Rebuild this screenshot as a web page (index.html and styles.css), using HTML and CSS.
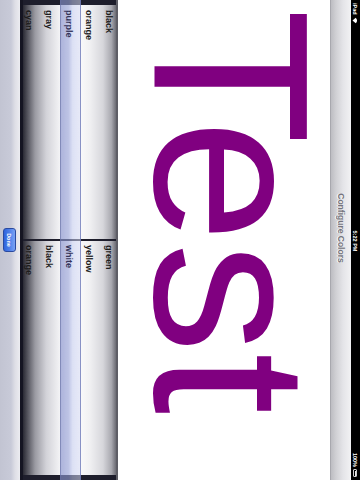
FILE: index.html
```html
<!DOCTYPE html>
<html lang="en">
<head>
    <meta charset="UTF-8">
    <meta name="viewport" content="width=device-width, initial-scale=1.0">
    <title>Configure Colors</title>
    <link rel="stylesheet" href="styles.css">
</head>
<body>
    <div class="screen">
        <div class="status-bar">
            <div class="status-left">
                iPad
                <svg class="wifi" width="7" height="6" viewBox="0 0 14 12">
                    <path d="M7 11 L1.5 4.5 A8 8 0 0 1 12.5 4.5 Z" fill="#fff"/>
                </svg>
            </div>
            <div class="status-time">5:22 PM</div>
            <div class="status-right">
                100%
                <span class="battery"><span class="battery-fill"></span></span>
            </div>
        </div>

        <div class="nav-bar">
            <span class="nav-title">Configure Colors</span>
        </div>

        <div class="content">
            <div class="preview">Test</div>
        </div>

        <div class="picker">
            <div class="wheel">
                <div class="rows">
                    <div class="row">black</div>
                    <div class="row">orange</div>
                    <div class="row selected">purple</div>
                    <div class="row">gray</div>
                    <div class="row">cyan</div>
                </div>
            </div>
            <div class="wheel">
                <div class="rows">
                    <div class="row">green</div>
                    <div class="row">yellow</div>
                    <div class="row selected">white</div>
                    <div class="row">black</div>
                    <div class="row">orange</div>
                </div>
            </div>
            <div class="selection"></div>
        </div>

        <div class="toolbar">
            <button class="done">Done</button>
        </div>
    </div>
</body>
</html>
```

FILE: styles.css
```css
html, body {
    margin: 0;
    width: 360px;
    height: 480px;
    overflow: hidden;
    background-color: #ffffff;
    font-family: "Liberation Sans", Arial, sans-serif;
}

/* the device is held sideways, so the landscape screen is turned a quarter clockwise */
.screen {
    width: 480px;
    height: 360px;
    display: flex;
    flex-direction: column;
    transform-origin: 0 0;
    transform: translateX(360px) rotate(90deg);
}

.status-bar {
    height: 9px;
    flex: none;
    background-color: #000000;
    color: #ffffff;
    font-size: 5.5px;
    font-weight: bold;
    display: grid;
    grid-template-columns: 1fr auto 1fr;
    align-items: center;
    padding: 0 3px;
}
.status-left {
    display: flex;
    align-items: center;
    gap: 2px;
}
.status-time {
    padding-left: 2px;
}
.status-right {
    display: flex;
    align-items: center;
    justify-content: flex-end;
    gap: 2px;
}
.battery {
    width: 8px;
    height: 4px;
    border: 1px solid #cfcfcf;
    border-radius: 1px;
    display: flex;
    padding: 0.5px;
    box-sizing: border-box;
}
.battery-fill {
    flex: 1;
    background-color: #e8e8e8;
}

.nav-bar {
    height: 21px;
    flex: none;
    box-sizing: border-box;
    background: linear-gradient(to bottom, #f2f2f4 0%, #e4e4e8 40%, #d0d0d4 75%, #bdbdc2 100%);
    border-bottom: 1px solid #a8a8ae;
    display: flex;
    justify-content: center;
    align-items: center;
    padding-right: 24px;
}
.nav-title {
    font-size: 8.5px;
    font-weight: bold;
    color: #74747c;
    text-shadow: 0 1px 0 #ffffff;
}

.content {
    height: 212px;
    flex: none;
    background-color: #ffffff;
}
.preview {
    padding-left: 9px;
    font-size: 221px;
    line-height: 197px;
    color: #800080;
    white-space: nowrap;
}

.picker {
    position: relative;
    height: 98px;
    flex: none;
    box-sizing: border-box;
    display: grid;
    grid-template-columns: 1fr 1fr;
    gap: 2px;
    padding: 0 5px;
    background-color: #1e1e2c;
    border-top: 2px solid #5e5e66;
    border-bottom: 3px solid #151522;
}
.wheel {
    overflow: hidden;
    background: linear-gradient(to bottom,
        #6c6c74 0%, #a9a9b0 5%, #d6d6db 14%, #f0f0f2 28%, #ffffff 45%,
        #f4f4f6 60%, #d2d2d8 75%, #9a9aa2 87%, #55555e 95%, #2a2a34 100%);
}
.rows {
    position: relative;
    z-index: 1;
    margin-top: -3px;
}
.row {
    height: 20px;
    line-height: 20px;
    padding-left: 4px;
    font-size: 9px;
    font-weight: bold;
    color: #1c1c1c;
}
.wheel:first-child .row {
    padding-left: 5px;
}
.row.selected {
    color: #34345a;
}
.selection {
    position: absolute;
    left: 0;
    right: 0;
    top: 35px;
    height: 21px;
    box-sizing: border-box;
    border-top: 1px solid rgba(110, 120, 180, 0.6);
    border-bottom: 1px solid rgba(90, 100, 160, 0.7);
    background: linear-gradient(to bottom,
        rgba(215, 220, 245, 0.55) 0%, rgba(190, 198, 235, 0.55) 40%,
        rgba(150, 160, 215, 0.6) 60%, rgba(135, 145, 205, 0.65) 100%);
}

.toolbar {
    height: 20px;
    flex: none;
    background: linear-gradient(to bottom, #ececf1 0%, #dedee6 25%, #c8cad8 45%, #c2c4d2 100%);
    display: flex;
    justify-content: center;
    align-items: center;
}
.done {
    width: 24px;
    height: 13px;
    padding: 0;
    margin-top: 1px;
    border: 1px solid #2a4aa0;
    border-radius: 3px;
    background: linear-gradient(to bottom, #7aa2f4 0%, #4f80ea 50%, #2f64dc 100%);
    color: #ffffff;
    font-family: "Liberation Sans", Arial, sans-serif;
    font-size: 5.5px;
    font-weight: bold;
}
```
